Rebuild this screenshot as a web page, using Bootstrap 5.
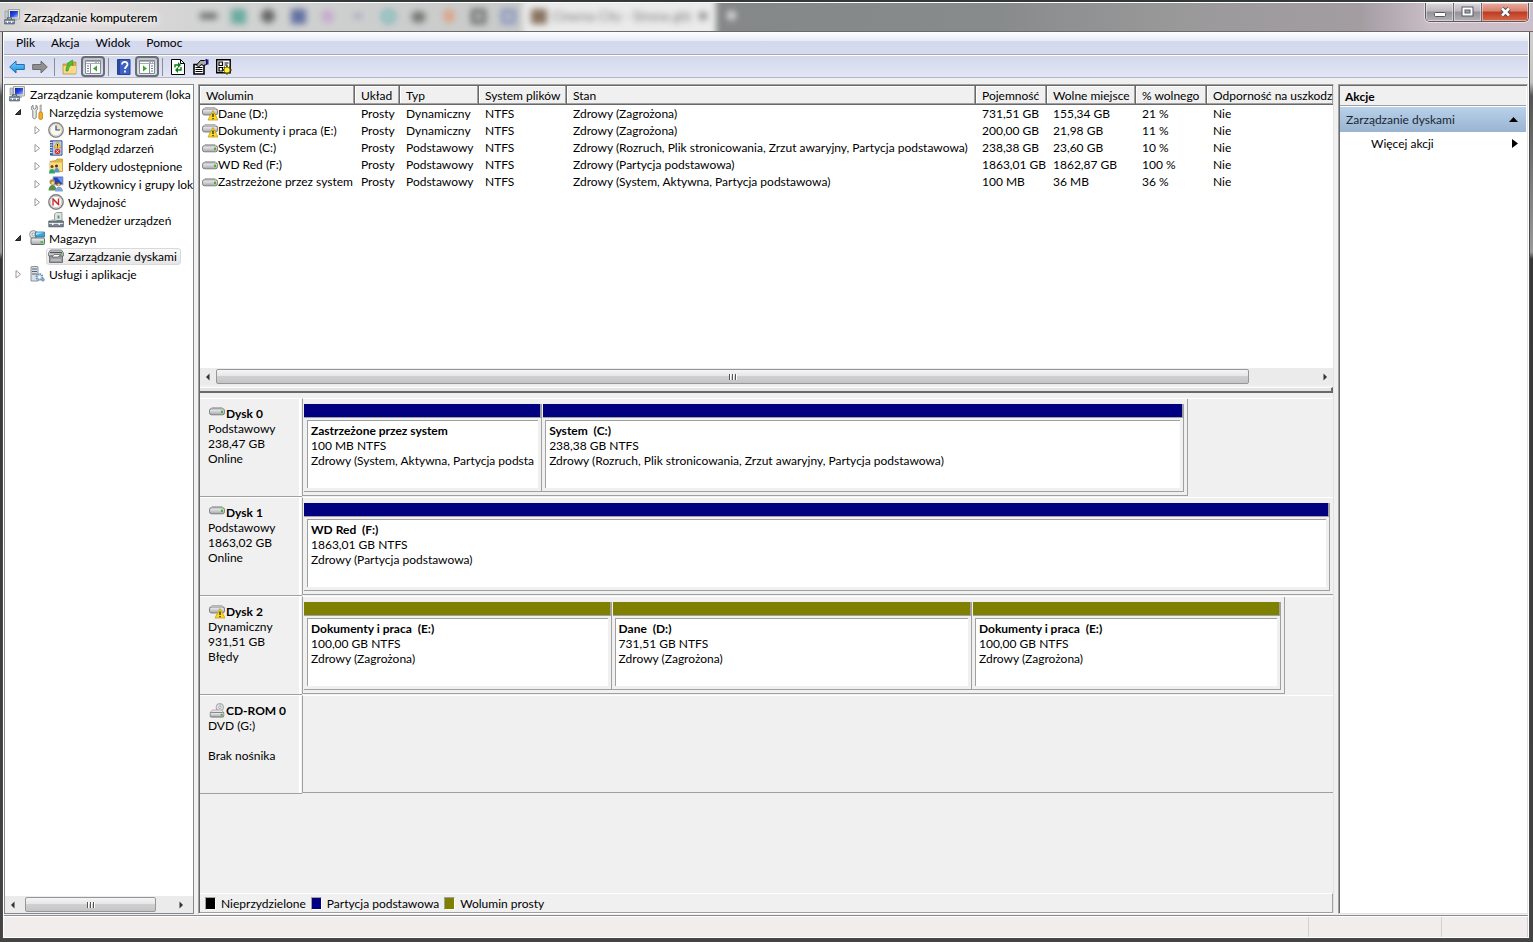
<!DOCTYPE html>
<html lang="pl">
<head>
<meta charset="utf-8">
<meta name="viewport" content="width=device-width, initial-scale=1">
<title>Zarządzanie komputerem</title>
<link href="https://cdn.jsdelivr.net/npm/bootstrap@5.3.0/dist/css/bootstrap.min.css" rel="stylesheet">
<style>
:root { --face: #f0f0f0; --shade: #a0a0a0; --dark: #696969; }
body { font: 12px/15px "Lato", sans-serif; color: #000; background: #3c3c3c; }
svg { display: block; flex: none; }
a { color: inherit; text-decoration: none; }
button { font: inherit; color: inherit; }
h1, h2, h3, ul, p { font-size: 12px; line-height: 15px; margin: 0; padding: 0; }
ul { list-style: none; }

/* window frame */
.frame { height: 100vh; padding: 0 4px 4px 3px; border-top: 2px solid #343a39;
  background: linear-gradient(#d8d8d8 0, #c4c4c4 80px, #555 94px, #9a9a9a 250px, #383838 257px, #444 100%); }
.titlebar { height: 30px; margin: 0 -4px 0 -3px; padding: 0 4px; position: relative; border-top: 1px solid #fff; border-bottom: 1px solid #6b6b6b;
  background: linear-gradient(90deg, #d2d2d2 0, #e6dede 60px, #d2d3d3 200px, #c8caca 520px, #c8caca 522px, #858889 720px, #888b8c 1000px, #9a999a 1180px, #a39da2 1360px, #c9bdc6 1430px, #cdbfca 100%); }
.behind { position: absolute; inset: 0; overflow: hidden; }
.behind > * { position: absolute; filter: blur(3px); }
.behind > i { opacity: .85; }
.tabglass { left: 523px; top: -6px; width: 193px; height: 42px; background: #ebebeb; }
.tabtext { left: 552px; top: 6px; font-size: 13px; color: #777; }
.app-title { position: relative; text-shadow: 0 0 6px #fff, 0 0 8px #fff, 0 0 10px #fff; }
.caption-btns { position: absolute; right: 4px; top: 0; height: 19px; border: 1px solid #5d5a60; border-top: 0; border-radius: 0 0 5px 5px; overflow: hidden; box-shadow: 0 0 0 1px #ffffff80; }
.caption-btns button { border: 0; border-right: 1px solid #6d6a70; padding: 0; width: 28px; display: flex; align-items: center; justify-content: center;
  background: linear-gradient(#dcd8dc 0, #bcb7bd 45%, #969097 50%, #b5afb6 100%); box-shadow: inset 0 0 0 1px #ffffff70; }
.caption-btns .shut { width: 46px; border-right: 0; background: linear-gradient(#e9aca0 0, #d6816f 45%, #bb3a22 50%, #d9694a 100%); }

.client { background: var(--face); border: 1px solid #fff; border-width: 0 1px; outline: 1px solid #4a4a4a; min-height: 0; }
.menubar { height: 23px; padding-bottom: 1px; border-bottom: 1px solid #a9aaae; background: linear-gradient(#fff 0, #e6ebf4 9px, #d4d9ed 9px, #d5daee 100%); }
.menubar button { border: 0; background: none; padding: 0 8px; }
.toolbar { height: 23px; border-top: 1px solid #fff; border-bottom: 1px solid #b2b6cf; background: linear-gradient(#d3d8ec, #e2e6f5); gap: 7px; padding-left: 5px; }
.toolbar button { border: 0; background: none; padding: 0; width: 16px; height: 20px; display: flex; align-items: center; justify-content: center; }
.toolbar .pressed { width: 24px; height: 21px; margin: 0 -3px 0 -4px; border: 2px solid #6a6e78; border-radius: 4px; background: linear-gradient(#bfc3d0, #dfe2ee); }
.sep { width: 1px; height: 18px; background: #8b8e99; margin: 0 0 0 -1px; }

/* three panes */
.panes { padding-top: 6px; gap: 4px; }
.tree { width: 190px; background: #fff; border: 1px solid #828790; }
.tree li a { display: flex; align-items: center; height: 18px; white-space: nowrap; }
.tree li svg { margin-right: 4px; }
.tree .root svg { margin-right: 5px; }
.tree .twist { width: 8px; height: 8px; margin: 0 7px 0 0; }
.tree .lvl1 > a { padding-left: 9px; }
.tree .lvl2 > a { padding-left: 28px; }
.tree .leaf > a { padding-left: 41px; }
.tree .leaf > a > svg { margin-left: 2px; }
.tree .current { height: 17px; padding: 0 3px 0 1px; border: 1px solid #d9d9d9; border-radius: 3px; background: linear-gradient(#fafafa, #e6e6e6); }
.middle { min-width: 0; border: 1px solid; border-color: var(--shade) #e3e3e3 #fff var(--shade); background: var(--face); box-shadow: inset 1px 1px var(--dark); padding: 1px 0 0 1px; }
.actions { width: 190px; background: #fff; border: 1px solid; border-color: var(--shade) #e3e3e3 #e3e3e3 var(--shade); box-shadow: inset 1px 1px var(--dark); padding: 1px 1px 0 1px; }
.actions h2 { font-weight: 700; height: 20px; padding: 3px 5px; background: var(--face); border-bottom: 1px solid var(--shade); }
.actions .group { height: 25px; margin-top: 1px; padding: 0 8px 0 6px; color: #1a2733; background: linear-gradient(#b9d1ea, #99b4d1); }
.actions .more { height: 23px; padding: 0 8px 0 31px; }

/* volume list */
.volumes { flex: 0 0 282px; background: #fff; overflow: hidden; }
.volumes table { table-layout: fixed; width: 100%; border-collapse: separate; border-spacing: 0; }
.volumes th { height: 19px; padding: 1px 0 0 6px; font-weight: 400; white-space: nowrap; overflow: hidden; background: var(--face);
  border-right: 1px solid var(--dark); border-bottom: 1px solid var(--dark); box-shadow: inset -1px -1px var(--shade), inset 1px 1px #fff; }
.volumes th:last-child { border-right: 0; }
.volumes td { height: 17px; padding: 0 0 0 6px; line-height: 15px; white-space: nowrap; }
.volumes td:first-child { padding-left: 2px; }

/* scroll bars */
.hscroll { height: 17px; background: #ebebeb; padding: 0 4px; }
.hscroll .thumb { height: 15px; border: 1px solid #979797; border-radius: 2px; background: linear-gradient(#f5f5f5 0, #e6e6e7 45%, #d0d0d2 50%, #c5c5c8 100%); }
.splitter { height: 6px; margin: 2px 0 0; border-top: 1px solid #fff; border-right: 2px solid var(--dark); border-bottom: 2px solid var(--dark); background: #e3e3e3; }

/* disk map */
.disks { padding-top: 5px; min-height: 0; }
.disk { height: 99px; }
.disk-label { flex: 0 0 102px; padding: 7px 0 0 8px; border-top: 1px solid #fff; border-bottom: 1px solid var(--shade); box-shadow: inset -1px 0 var(--face), inset -3px 0 #fff; }
.disk-label h3, .part h3 { font-weight: 700; }
.disk-label h3 { display: flex; }
.track { border-left: 1px solid var(--shade); border-top: 1px solid #fff; height: 98px; }
.disk-box { height: 97px; border-right: 1px solid var(--shade); border-bottom: 1px solid var(--shade); padding: 5px 3px 3px 1px; }
.disk-box.whole { border-right: 0; }
.part { min-width: 0; flex-basis: 0; border-right: 1px solid var(--shade); border-bottom: 1px solid var(--shade); }
.part .bar { height: 14px; border-right: 1px solid var(--shade); border-bottom: 1px solid var(--shade); background: #000080; }
.part + .part .bar { margin-left: 1px; }
.dynamic .bar { background: #808000; }
.part .face { margin: 2px 3px 3px; padding: 2px 3px 0; height: 68px; background: #fff; border: 1px solid var(--shade); border-right: 0; border-bottom: 0; overflow: hidden; white-space: nowrap; }
.empty-track { border-bottom: 1px solid var(--shade); }
.legend { height: 20px; border-top: 1px solid #fff; border-right: 1px solid var(--shade); border-bottom: 1px solid var(--shade); padding-left: 5px; gap: 5px; }
.chip { width: 11px; height: 13px; border: 1px solid var(--shade); border-right-color: #fff; border-bottom-color: #fff; }

.status { height: 23px; margin-top: 1px; border-top: 1px solid #8b8b8b; padding-top: 1px; background: #fff; }
.status div { background: #f1edec; border-right: 1px solid #d2d0d0; margin-bottom: 1px; }
</style>
</head>
<body>
<svg width="0" height="0" style="position:absolute" aria-hidden="true">
  <defs>
    <linearGradient id="scr" x1="0" y1="0" x2="1" y2="1"><stop offset="0" stop-color="#0820b8"/><stop offset=".5" stop-color="#2448e0"/><stop offset="1" stop-color="#a8c0ff"/></linearGradient>
    <linearGradient id="metal" x1="0" y1="0" x2="0" y2="1"><stop offset="0" stop-color="#f4f4f6"/><stop offset="1" stop-color="#a4a6aa"/></linearGradient>
    <linearGradient id="arr" x1="0" y1="0" x2="0" y2="1"><stop offset="0" stop-color="#7fd0fa"/><stop offset="1" stop-color="#1c8ad8"/></linearGradient>
    <symbol id="i-comp" viewBox="0 0 16 16"><path d="M4.500.5h11v9.500h-11z" fill="#e8e4d4" stroke="#a8a698"/><path d="M6 2h8v6.500H6z" fill="url(#scr)"/><path d="M1 2h3v7H1z" fill="#c5c9d0" stroke="#8a8f98" stroke-width=".6"/><path d="M8 10h5v2H8z" fill="#b8b8b0"/><path d="M.5 10.500h10V15H.5z" fill="#76889a" stroke="#4d5d6c" stroke-width=".6"/><path d="M3.500 10V8.800h4V10" fill="none" stroke="#4d5d6c"/><path d="M1 12.500h9" stroke="#d5dde5" stroke-width=".8"/><path d="M3 12h1v2H3zM7 12h1v2H7z" fill="#fff"/></symbol>
    <symbol id="i-tools" viewBox="0 0 16 16"><path d="M4 1.200v3l1.500 1L7 4.200v-3c2 1 2.300 4 .2 5.500v6.500c0 2-3.400 2-3.400 0V6.700C1.700 5.200 2 2.200 4 1.200z" fill="#e9e9e9" stroke="#777" stroke-width=".9"/><path d="M11 1h1.300v8H11z" fill="#ccc" stroke="#777" stroke-width=".5"/><rect x="9.900" y="8" width="3.600" height="7.500" rx="1.400" fill="#f5ae1c" stroke="#b87408" stroke-width=".7"/></symbol>
    <symbol id="i-clock" viewBox="0 0 16 16"><circle cx="8" cy="8" r="7.200" fill="#fbf9ee" stroke="#858585" stroke-width="1.400"/><circle cx="8" cy="8" r="5.800" fill="none" stroke="#ccc" stroke-width=".8"/><path d="M8 8V3a5 5 0 0 1 5 5z" fill="#f2d38b" opacity=".7"/><path d="M8 3.500V8h4" fill="none" stroke="#234a9c" stroke-width="1.200"/></symbol>
    <symbol id="i-event" viewBox="0 0 16 16"><path d="M2.500.8h11.500v14.400H2.500z" fill="#b9c9e4" stroke="#3d5a94"/><path d="M3 1h2v14H3z" fill="#4a68a4"/><path d="M1.500 2.500h3M1.500 5h3M1.500 7.500h3M1.500 10h3M1.500 12.500h3" stroke="#dbe3f2"/><path d="M9.500 1.800l3.500 6H6z" fill="#ffd42e" stroke="#b28400" stroke-width=".5"/><path d="M9.500 4v2M9.500 6.500v.8" stroke="#222"/><circle cx="9.500" cy="11.500" r="2.800" fill="#d63338"/><path d="M8.400 10.400l2.200 2.200m0-2.200l-2.200 2.200" stroke="#fff" stroke-width=".8"/></symbol>
    <symbol id="i-share" viewBox="0 0 16 16"><path d="M2 3.500l6-1 1-1.500h5.500v12.500H2z" fill="#e5b542" stroke="#c1902c" stroke-width=".7"/><path d="M2 4.500h12v8.500H2z" fill="#f8dd83"/><circle cx="4" cy="8.500" r="1.500" fill="#6b4a28"/><path d="M1 15.500c0-6 6-6 6 0z" fill="#2fa36c"/><circle cx="8.500" cy="8" r="1.500" fill="#41352c"/><path d="M6 14.500c0-6 5.500-6 5.500 0z" fill="#5a8fd0"/></symbol>
    <symbol id="i-users" viewBox="0 0 16 16"><path d="M5 .8h10v8H5z" fill="#1d43c8" stroke="#b0b3ba"/><path d="M9 1.500h5.500V8z" fill="#6d93f5"/><circle cx="4.300" cy="6" r="2.800" fill="#b78c3d"/><circle cx="4.800" cy="7" r="1.600" fill="#f1cfa5"/><path d="M.5 14.500c0-7.500 8-7.500 8 0z" fill="#5c8d46"/><circle cx="10.500" cy="8" r="2.300" fill="#704a2c"/><circle cx="10.700" cy="8.800" r="1.400" fill="#e9bd92"/><path d="M7 15.500c0-6.500 8-6.500 8 0z" fill="#7da7dc"/></symbol>
    <symbol id="i-perf" viewBox="0 0 16 16"><circle cx="8" cy="8" r="7.200" fill="#fdfdfd" stroke="#7d7d7d" stroke-width="1.400"/><circle cx="8" cy="8" r="5.600" fill="none" stroke="#aaa" stroke-width=".6"/><path d="M5 11.500V5.500M10.500 10.500V4.500" fill="none" stroke="#d42020" stroke-width="1.300"/><path d="M4.500 4.500l6.500 6.500" stroke="#c22" stroke-width="1.600"/></symbol>
    <symbol id="i-dev" viewBox="0 0 16 16"><path d="M6.500 8.500V2l2-1.500H14v8z" fill="#dfe2e5" stroke="#888" stroke-width=".8"/><path d="M9.500 3.500h2v3h-2z" fill="#48a860"/><path d="M.8 9h14.500v5.800H.8z" fill="#77858f" stroke="#4b555e" stroke-width=".8"/><path d="M1 11.500h14" stroke="#dce2e8"/><path d="M4 11h1.500v2H4zM10.500 11H12v2h-1.500z" fill="#fff"/><path d="M2.500 9l1-1.500h4L9 9" fill="#a5b0b8"/></symbol>
    <symbol id="i-store" viewBox="0 0 16 16"><circle cx="4.500" cy="4.500" r="4" fill="#dcdcdc" stroke="#8a8a8a" stroke-width=".8"/><circle cx="4.500" cy="4.500" r="1.300" fill="#fff" stroke="#777" stroke-width=".6"/><path d="M6.500 2h9v5h-9z" fill="#38a6d8" stroke="#1b6d96" stroke-width=".7"/><path d="M7 2.500h8L7 5z" fill="#a9e0f6"/><rect x="2" y="8" width="13.500" height="6.500" rx="1" fill="url(#metal)" stroke="#5d6064" stroke-width=".9"/><path d="M11.500 11h2.500v2h-2.500z" fill="#35d22e"/></symbol>
    <symbol id="i-disk2" viewBox="0 0 16 16"><path d="M2.500 2h11l2 3v3H.5V5z" fill="#c9cacd" stroke="#77797d" stroke-width=".9"/><path d="M2 4.500h12" stroke="#505357" stroke-width="1.300"/><path d="M1.500 8h13v6.500h-13z" fill="#9b9da0" stroke="#6a6c70" stroke-width=".9"/><path d="M4 9l2-2.500h7L10 9z" fill="#fff" stroke="#54575a" stroke-width=".7"/><path d="M13 5h1.500v1.500H13z" fill="#33c72d"/><path d="M3 12h10" stroke="#d8d8da"/></symbol>
    <symbol id="i-serv" viewBox="0 0 16 16"><path d="M2 1l1-.5h5l1 .5v14H2z" fill="#d8e0e7" stroke="#7c8893" stroke-width=".9"/><path d="M3 3h5M3 5.500h5M3 8h5" stroke="#526575"/><circle cx="10.500" cy="11" r="3" fill="#c7d9e8" stroke="#6f93b0" stroke-width="1.800" stroke-dasharray="1.500 .8"/><circle cx="10.500" cy="11" r="1.200" fill="#fff"/><circle cx="14" cy="13.800" r="1.300" fill="#9cbcd2" stroke="#6f93b0"/></symbol>
    <symbol id="i-drive" viewBox="0 0 16 16"><path d="M3 4.500h10l2.500 2.500H.5z" fill="#f2f2f4" stroke="#9a9a9e" stroke-width=".7"/><rect x=".5" y="5.800" width="15" height="6" rx="2" fill="url(#metal)" stroke="#77777c" stroke-width=".9"/><path d="M12 7.500h2v2.500h-2z" fill="#3cbc28"/></symbol>
    <symbol id="i-drivewarn" viewBox="0 0 16 16"><path d="M3 1.500h10l2.500 2.500H.5z" fill="#f2f2f4" stroke="#9a9a9e" stroke-width=".7"/><rect x=".5" y="3" width="15" height="6" rx="2" fill="url(#metal)" stroke="#77777c" stroke-width=".9"/><path d="M11 4.500l5 9.500H6z" fill="#ffd91e" stroke="#c2a010" stroke-width=".8" stroke-linejoin="round"/><path d="M11 7.500V11M11 12v1.300" stroke="#222" stroke-width="1.300"/></symbol>
    <symbol id="i-cd" viewBox="0 0 16 16"><circle cx="11" cy="4.500" r="4" fill="#e2e2e8" stroke="#8e8e94" stroke-width=".8"/><circle cx="11" cy="4.500" r="1.300" fill="#fff" stroke="#777" stroke-width=".6"/><path d="M11 .8L12 3" stroke="#8fcb8c"/><path d="M3 7.500h10l2.500 3H.5z" fill="#f2f2f4" stroke="#8a8a8e" stroke-width=".7"/><rect x=".5" y="10" width="15" height="5" rx="1.500" fill="url(#metal)" stroke="#6b6b70" stroke-width=".9"/><path d="M12 11.500h2v2h-2z" fill="#3cbc28"/></symbol>
    <symbol id="t-open" viewBox="0 0 8 8"><path d="M6.500 1.500v5h-5z" fill="#404040" stroke="#222"/></symbol>
    <symbol id="t-shut" viewBox="0 0 8 8"><path d="M2 .5L6.500 4.300 2 8z" fill="#fff" stroke="#989898"/></symbol>
    <symbol id="a-left" viewBox="0 0 8 8"><path d="M5.500.5v7L2 4z" fill="#333"/></symbol>
    <symbol id="a-right" viewBox="0 0 8 8"><path d="M2.500.5v7L6 4z" fill="#333"/></symbol>
    <symbol id="grip" viewBox="0 0 8 8"><path d="M.5 1v6M3.500 1v6M6.500 1v6" stroke="#555"/><path d="M1.500 1v6M4.500 1v6M7.500 1v6" stroke="#fff"/></symbol>
    <symbol id="tb-pane" viewBox="0 0 16 14"><path d="M.5.5h15v13H.5z" fill="#fdfdfd" stroke="#868a92"/><path d="M1 1h14v3H1z" fill="#a9adb6"/><path d="M1 2.500h9M12 2.500h1M14 2.500h1" stroke="#fff"/></symbol>
  </defs>
</svg>

<div class="frame d-flex flex-column">
  <header class="titlebar d-flex align-items-center">
    <div class="behind" aria-hidden="true">
      <i style="left:200px;top:10px;width:17px;height:6px;background:#555"></i>
      <i style="left:231px;top:6px;width:15px;height:15px;background:#59a597"></i>
      <i style="left:261px;top:6px;width:14px;height:14px;background:#555;border-radius:50%"></i>
      <i style="left:291px;top:6px;width:15px;height:15px;background:#52639a"></i>
      <i style="left:321px;top:7px;width:13px;height:13px;background:#c3a5cd;border-radius:50%"></i>
      <i style="left:353px;top:10px;width:10px;height:6px;background:#a8adc0"></i>
      <i style="left:381px;top:6px;width:15px;height:15px;border:4px solid #69b3b5;border-radius:50%"></i>
      <i style="left:411px;top:8px;width:15px;height:12px;background:#6a6b66;border-radius:50%"></i>
      <i style="left:443px;top:6px;width:12px;height:14px;background:#dea07d;border-radius:50%"></i>
      <i style="left:471px;top:6px;width:15px;height:15px;border:4px solid #555"></i>
      <i style="left:501px;top:6px;width:15px;height:15px;border:4px solid #7b89b8"></i>
      <div class="tabglass"></div>
      <i style="left:531px;top:6px;width:16px;height:15px;background:#77604a"></i>
      <span class="tabtext">Cinema City - Strona głó</span>
      <i style="left:699px;top:9px;width:8px;height:8px;background:#888"></i>
      <i style="left:727px;top:8px;width:9px;height:9px;background:#eee;border-radius:50%"></i>
    </div>
    <svg class="position-relative" width="16" height="16"><use href="#i-comp"/></svg>
    <h1 class="app-title ms-1">Zarządzanie komputerem</h1>
    <div class="caption-btns d-flex">
      <button type="button" aria-label="Minimalizuj"><svg width="13" height="12"><rect x="1.500" y="6.500" width="11" height="4" rx="1" fill="#fff" stroke="#54586a"/></svg></button>
      <button type="button" aria-label="Maksymalizuj"><svg width="13" height="12"><rect x="1" y="1" width="11" height="9" fill="#fff" stroke="#54586a"/><rect x="4" y="4" width="5" height="3" fill="#a9a6ac" stroke="#54586a"/></svg></button>
      <button type="button" class="shut" aria-label="Zamknij"><svg width="13" height="12"><path d="M3 2.500l7 7M10 2.500l-7 7" stroke="#4a4553" stroke-width="4.500"/><path d="M3 2.500l7 7M10 2.500l-7 7" stroke="#fff" stroke-width="2.500"/></svg></button>
    </div>
  </header>

  <div class="client d-flex flex-column flex-grow-1">
    <nav class="menubar d-flex align-items-center ps-1">
      <button type="button">Plik</button><button type="button">Akcja</button><button type="button">Widok</button><button type="button">Pomoc</button>
    </nav>
    <div class="toolbar d-flex align-items-center" role="toolbar">
      <button type="button" aria-label="Wstecz"><svg width="16" height="14"><path d="M.7 7L7 1v3.500h8.300v5H7V13z" fill="url(#arr)" stroke="#1b6fb5" stroke-linejoin="round"/></svg></button>
      <button type="button" aria-label="Dalej"><svg width="16" height="14"><path d="M15.300 7L9 1v3.500H.7v5H9V13z" fill="#8f8f93" stroke="#6c6c70" stroke-linejoin="round"/></svg></button>
      <span class="sep"></span>
      <button type="button" aria-label="W górę"><svg width="16" height="16"><path d="M1 5h6l1-2h6v12H1z" fill="#d8a94a" stroke="#b48a37" stroke-width=".7"/><path d="M1.500 7H14v7.500H1.500z" fill="#f7d98a"/><path d="M4 12c0-4 1-6 2.500-6.500L5 4.500 10.500 1l.5 5.500-1.500-.8C7.500 7.500 6.500 8.500 6 12z" fill="#4cc52b" stroke="#2c8f17" stroke-width=".6"/></svg></button>
      <button type="button" class="pressed" aria-label="Pokaż drzewo konsoli"><svg width="16" height="14"><use href="#tb-pane"/><path d="M5.500 4v9" stroke="#868a92"/><path d="M2 6h2M2 8.500h2M2 11h2" stroke="#5a7f9c"/><path d="M12 5.500v6L8 8.500z" fill="#37a52b"/></svg></button>
      <span class="sep"></span>
      <button type="button" aria-label="Pomoc"><svg width="14" height="16"><path d="M.5.5h12.500v15H.5z" fill="#3d62c4" stroke="#27438f"/><path d="M1 1h2v14H1z" fill="#2848a0"/><path d="M5 5.500c0-3.500 5.500-3.300 5.500 0 0 2-2.500 2-2.500 4.500M8 11.500v2" fill="none" stroke="#fff" stroke-width="1.800"/></svg></button>
      <button type="button" class="pressed" aria-label="Pokaż okienko akcji"><svg width="16" height="14"><use href="#tb-pane"/><path d="M10.500 4v9" stroke="#868a92"/><path d="M12 6h2M12 8.500h2M12 11h2" stroke="#5a7f9c"/><path d="M4 5.500v6l4-3z" fill="#37a52b"/></svg></button>
      <span class="sep"></span>
      <button type="button" aria-label="Odśwież"><svg width="14" height="16"><path d="M.5.5h9l4 4v11H.5z" fill="#fff" stroke="#000"/><path d="M9.500.5v4h4" fill="none" stroke="#000"/><path d="M4 8.500V6h4M10 8v3H6" fill="none" stroke="#0a7d14" stroke-width="1.400"/><path d="M7 3l3 3-3 3zM7 8l-3 3 3 3z" fill="#0a7d14"/></svg></button>
      <button type="button" aria-label="Właściwości"><svg width="16" height="16"><path d="M1 5.500h10V15H1z" fill="#fff" stroke="#000" stroke-width="1.600"/><path d="M2.500 8.500h7M2.500 10.500h7M2.500 12.500h7" stroke="#000"/><path d="M3.500 6l4-4.500h4l2-1v5l-3 1-2-1-3 2.500z" fill="#aaa" stroke="#000"/><path d="M13.500.5h2v5h-2z" fill="#1b1b9c"/></svg></button>
      <button type="button" aria-label="Ustawienia"><svg width="16" height="16"><path d="M.7.7h13.500v13H.7z" fill="#fff" stroke="#000" stroke-width="1.400"/><path d="M3 3h3.500v3.500H3zM3 8.500h3.500V12H3z" fill="none" stroke="#000" stroke-width="1.200"/><path d="M8.500 4h4M8.500 6h3" stroke="#000"/><path d="M11 6.500v9M6.500 11h9M7.800 7.800l6.400 6.400M14.200 7.800l-6.400 6.400" stroke="#4b4600" stroke-width="1.800"/><circle cx="11" cy="11" r="2.600" fill="#fff23a"/></svg></button>
    </div>

    <main class="panes d-flex flex-grow-1">
      <aside class="tree d-flex flex-column flex-shrink-0 overflow-hidden">
        <ul class="flex-grow-1">
          <li class="root"><a href="#" class="ps-1"><svg width="16" height="16"><use href="#i-comp"/></svg>Zarządzanie komputerem (loka</a></li>
          <li class="lvl1"><a href="#"><svg class="twist"><use href="#t-open"/></svg><svg width="16" height="16"><use href="#i-tools"/></svg>Narzędzia systemowe</a></li>
          <li class="lvl2"><a href="#"><svg class="twist"><use href="#t-shut"/></svg><svg width="16" height="16"><use href="#i-clock"/></svg>Harmonogram zadań</a></li>
          <li class="lvl2"><a href="#"><svg class="twist"><use href="#t-shut"/></svg><svg width="16" height="16"><use href="#i-event"/></svg>Podgląd zdarzeń</a></li>
          <li class="lvl2"><a href="#"><svg class="twist"><use href="#t-shut"/></svg><svg width="16" height="16"><use href="#i-share"/></svg>Foldery udostępnione</a></li>
          <li class="lvl2"><a href="#"><svg class="twist"><use href="#t-shut"/></svg><svg width="16" height="16"><use href="#i-users"/></svg>Użytkownicy i grupy lok</a></li>
          <li class="lvl2"><a href="#"><svg class="twist"><use href="#t-shut"/></svg><svg width="16" height="16"><use href="#i-perf"/></svg>Wydajność</a></li>
          <li class="leaf"><a href="#"><svg width="16" height="16"><use href="#i-dev"/></svg>Menedżer urządzeń</a></li>
          <li class="lvl1"><a href="#"><svg class="twist"><use href="#t-open"/></svg><svg width="16" height="16"><use href="#i-store"/></svg>Magazyn</a></li>
          <li class="leaf"><a href="#" aria-current="true"><span class="current d-flex align-items-center"><svg width="16" height="16"><use href="#i-disk2"/></svg>Zarządzanie dyskami</span></a></li>
          <li class="lvl1"><a href="#"><svg class="twist"><use href="#t-shut"/></svg><svg width="16" height="16"><use href="#i-serv"/></svg>Usługi i aplikacje</a></li>
        </ul>
        <div class="hscroll d-flex align-items-center"><svg width="8" height="8"><use href="#a-left"/></svg><div class="thumb d-flex align-items-center justify-content-center ms-2" style="width:131px"><svg width="8" height="8"><use href="#grip"/></svg></div><svg class="ms-auto me-1" width="8" height="8"><use href="#a-right"/></svg></div>
      </aside>

      <section class="middle d-flex flex-column flex-grow-1">
        <div class="volumes">
          <table>
            <colgroup><col style="width:155px"><col style="width:45px"><col style="width:79px"><col style="width:88px"><col style="width:409px"><col style="width:71px"><col style="width:89px"><col style="width:71px"><col></colgroup>
            <thead><tr><th>Wolumin</th><th>Układ</th><th>Typ</th><th>System plików</th><th>Stan</th><th>Pojemność</th><th>Wolne miejsce</th><th>% wolnego</th><th>Odporność na uszkodz</th></tr></thead>
            <tbody>
              <tr><td><div class="d-flex"><svg width="16" height="16"><use href="#i-drivewarn"/></svg>Dane (D:)</div></td><td>Prosty</td><td>Dynamiczny</td><td>NTFS</td><td>Zdrowy (Zagrożona)</td><td>731,51 GB</td><td>155,34 GB</td><td>21 %</td><td>Nie</td></tr>
              <tr><td><div class="d-flex"><svg width="16" height="16"><use href="#i-drivewarn"/></svg>Dokumenty i praca (E:)</div></td><td>Prosty</td><td>Dynamiczny</td><td>NTFS</td><td>Zdrowy (Zagrożona)</td><td>200,00 GB</td><td>21,98 GB</td><td>11 %</td><td>Nie</td></tr>
              <tr><td><div class="d-flex"><svg width="16" height="16"><use href="#i-drive"/></svg>System (C:)</div></td><td>Prosty</td><td>Podstawowy</td><td>NTFS</td><td>Zdrowy (Rozruch, Plik stronicowania, Zrzut awaryjny, Partycja podstawowa)</td><td>238,38 GB</td><td>23,60 GB</td><td>10 %</td><td>Nie</td></tr>
              <tr><td><div class="d-flex"><svg width="16" height="16"><use href="#i-drive"/></svg>WD Red (F:)</div></td><td>Prosty</td><td>Podstawowy</td><td>NTFS</td><td>Zdrowy (Partycja podstawowa)</td><td>1863,01 GB</td><td>1862,87 GB</td><td>100 %</td><td>Nie</td></tr>
              <tr><td><div class="d-flex"><svg width="16" height="16"><use href="#i-drive"/></svg>Zastrzeżone przez system</div></td><td>Prosty</td><td>Podstawowy</td><td>NTFS</td><td>Zdrowy (System, Aktywna, Partycja podstawowa)</td><td>100 MB</td><td>36 MB</td><td>36 %</td><td>Nie</td></tr>
            </tbody>
          </table>
        </div>
        <div class="hscroll d-flex align-items-center"><svg width="8" height="8"><use href="#a-left"/></svg><div class="flex-grow-1 ps-1"><div class="thumb d-flex align-items-center justify-content-center" style="width:93.500%"><svg width="8" height="8"><use href="#grip"/></svg></div></div><svg width="8" height="8"><use href="#a-right"/></svg></div>
        <div class="splitter"></div>

        <div class="disks d-flex flex-column flex-grow-1">
          <section class="disk d-flex">
            <div class="disk-label"><h3><svg width="18" height="12" viewBox="0 3 16 12"><use href="#i-drive" width="16" height="16"/></svg>Dysk 0</h3><p>Podstawowy<br>238,47 GB<br>Online</p></div>
            <div class="track flex-grow-1"><div class="disk-box d-flex" style="width:85.9%">
              <div class="part" style="flex-grow:238"><div class="bar"></div><div class="face"><h3>Zastrzeżone przez system</h3>100 MB NTFS<br>Zdrowy (System, Aktywna, Partycja podsta</div></div>
              <div class="part" style="flex-grow:643"><div class="bar"></div><div class="face"><h3>System&nbsp; (C:)</h3>238,38 GB NTFS<br>Zdrowy (Rozruch, Plik stronicowania, Zrzut awaryjny, Partycja podstawowa)</div></div>
            </div></div>
          </section>
          <section class="disk d-flex">
            <div class="disk-label"><h3><svg width="18" height="12" viewBox="0 3 16 12"><use href="#i-drive" width="16" height="16"/></svg>Dysk 1</h3><p>Podstawowy<br>1863,02 GB<br>Online</p></div>
            <div class="track flex-grow-1"><div class="disk-box whole d-flex" style="width:100%">
              <div class="part" style="flex-grow:1"><div class="bar"></div><div class="face"><h3>WD Red&nbsp; (F:)</h3>1863,01 GB NTFS<br>Zdrowy (Partycja podstawowa)</div></div>
            </div></div>
          </section>
          <section class="disk dynamic d-flex">
            <div class="disk-label"><h3><svg width="18" height="15" viewBox="0 0 16 15"><use href="#i-drivewarn" width="16" height="16"/></svg>Dysk 2</h3><p>Dynamiczny<br>931,51 GB<br>Błędy</p></div>
            <div class="track flex-grow-1"><div class="disk-box d-flex" style="width:95.3%">
              <div class="part" style="flex-grow:308"><div class="bar"></div><div class="face"><h3>Dokumenty i praca&nbsp; (E:)</h3>100,00 GB NTFS<br>Zdrowy (Zagrożona)</div></div>
              <div class="part" style="flex-grow:361"><div class="bar"></div><div class="face"><h3>Dane&nbsp; (D:)</h3>731,51 GB NTFS<br>Zdrowy (Zagrożona)</div></div>
              <div class="part" style="flex-grow:309"><div class="bar"></div><div class="face"><h3>Dokumenty i praca&nbsp; (E:)</h3>100,00 GB NTFS<br>Zdrowy (Zagrożona)</div></div>
            </div></div>
          </section>
          <section class="disk d-flex">
            <div class="disk-label"><h3><svg width="18" height="15" viewBox="0 0 16 16"><use href="#i-cd" width="16" height="16"/></svg>CD-ROM 0</h3><p>DVD (G:)<br><br>Brak nośnika</p></div>
            <div class="track empty-track flex-grow-1"></div>
          </section>
        </div>
        <div class="legend d-flex align-items-center">
          <span class="chip" style="background:#000"></span><span>Nieprzydzielone</span>
          <span class="chip" style="background:#000080"></span><span>Partycja podstawowa</span>
          <span class="chip" style="background:#808000"></span><span>Wolumin prosty</span>
        </div>
      </section>

      <aside class="actions flex-shrink-0">
        <h2>Akcje</h2>
        <a href="#" class="group d-flex align-items-center justify-content-between">Zarządzanie dyskami<svg width="9" height="5"><path d="M0 5L4.500 0 9 5z"/></svg></a>
        <a href="#" class="more d-flex align-items-center justify-content-between">Więcej akcji<svg width="6" height="9"><path d="M0 0v9l6-4.500z"/></svg></a>
      </aside>
    </main>
    <footer class="status d-flex"><div class="flex-grow-1"></div><div style="width:133px"></div><div style="width:86px"></div></footer>
  </div>
</div>
<script src="https://cdn.jsdelivr.net/npm/bootstrap@5.3.0/dist/js/bootstrap.bundle.min.js"></script>
</body>
</html>
